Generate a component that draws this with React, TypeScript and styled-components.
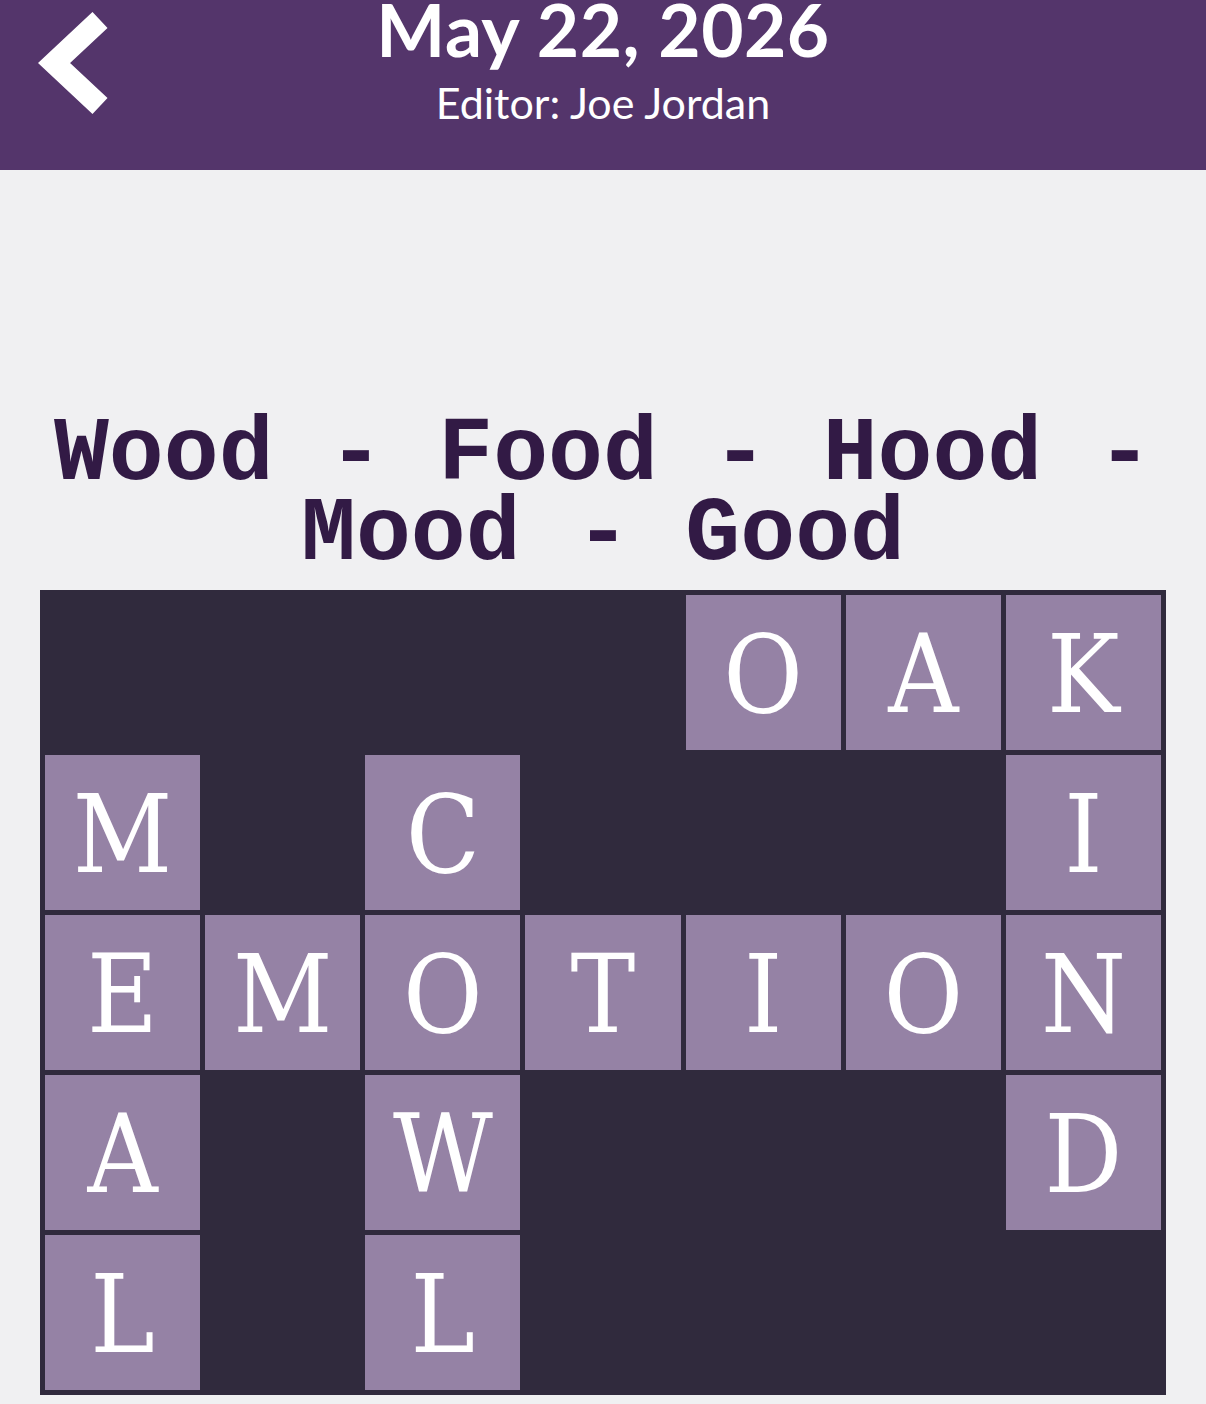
import React from 'react'
import styled, { createGlobalStyle } from 'styled-components'

const GlobalStyle = createGlobalStyle`
  html, body {
    margin: 0;
    padding: 0;
    background: #f0f0f2;
  }
  body {
    font-family: Lato, "Noto Sans", sans-serif;
  }
`

const Page = styled.div`
  width: 1206px;
  min-height: 1404px;
  background: #f0f0f2;
  overflow: hidden;
`

const Header = styled.header`
  height: 170px;
  background: #54356b;
  display: grid;
  grid-template-columns: 1fr auto 1fr;
  align-items: start;
  color: #fff;
`

const BackButton = styled.button`
  justify-self: start;
  margin: 12px 0 0 38px;
  padding: 0;
  border: 0;
  background: none;
  width: 72px;
  height: 106px;
  cursor: pointer;
`

const TitleBlock = styled.div`
  display: flex;
  flex-direction: column;
  align-items: center;
`

const DateTitle = styled.h1`
  margin: -10px 0 0;
  font-family: Lato, "Noto Sans", sans-serif;
  font-weight: 700;
  font-size: 73px;
  line-height: 78px;
  letter-spacing: 0.5px;
`

const Editor = styled.div`
  margin-top: 10px;
  font-family: Lato, "Noto Sans", sans-serif;
  font-weight: 400;
  font-size: 43px;
  line-height: 50px;
`

const Main = styled.main`
  padding: 245px 40px 0;
  display: flex;
  flex-direction: column;
  align-items: stretch;
`

const Clue = styled.h2`
  margin: 0 0 15px;
  text-align: center;
  font-family: "Liberation Mono", "DejaVu Sans Mono", monospace;
  font-weight: 700;
  font-size: 91.5px;
  line-height: 80px;
  color: #321a45;
`

const Board = styled.div`
  display: grid;
  grid-template-columns: repeat(7, 1fr);
  grid-auto-rows: 155px;
  gap: 5px;
  padding: 5px;
  background: #302a3d;
`

const Tile = styled.div<{ $filled: boolean }>`
  display: flex;
  align-items: center;
  justify-content: center;
  background: ${({ $filled }) => ($filled ? '#9582a5' : 'transparent')};
  color: #fff;
  font-family: "DejaVu Serif Condensed", "DejaVu Serif", "Liberation Serif", serif;
  font-stretch: condensed;
  font-size: 108px;
  line-height: 1;
  padding-top: 4px;
`

const rows = ['____OAK', 'M_C___I', 'EMOTION', 'A_W___D', 'L_L____']

const ChevronLeft = () => (
  <svg width="72" height="106" viewBox="0 0 72 106" fill="none">
    <path d="M62 8 L16 51 L62 94" stroke="#fff" strokeWidth="22" strokeLinecap="butt" strokeLinejoin="miter" />
  </svg>
)

const App = () => (
  <Page>
    <GlobalStyle />
    <Header>
      <BackButton aria-label="Back">
        <ChevronLeft />
      </BackButton>
      <TitleBlock>
        <DateTitle>May 22, 2026</DateTitle>
        <Editor>Editor: Joe Jordan</Editor>
      </TitleBlock>
      <div />
    </Header>
    <Main>
      <Clue>Wood - Food - Hood - Mood - Good</Clue>
      <Board>
        {rows.map((row, r) =>
          row.split('').map((ch, c) => (
            <Tile key={`${r}-${c}`} $filled={ch !== '_'}>
              {ch !== '_' ? ch : ''}
            </Tile>
          ))
        )}
      </Board>
    </Main>
  </Page>
)

export default App
